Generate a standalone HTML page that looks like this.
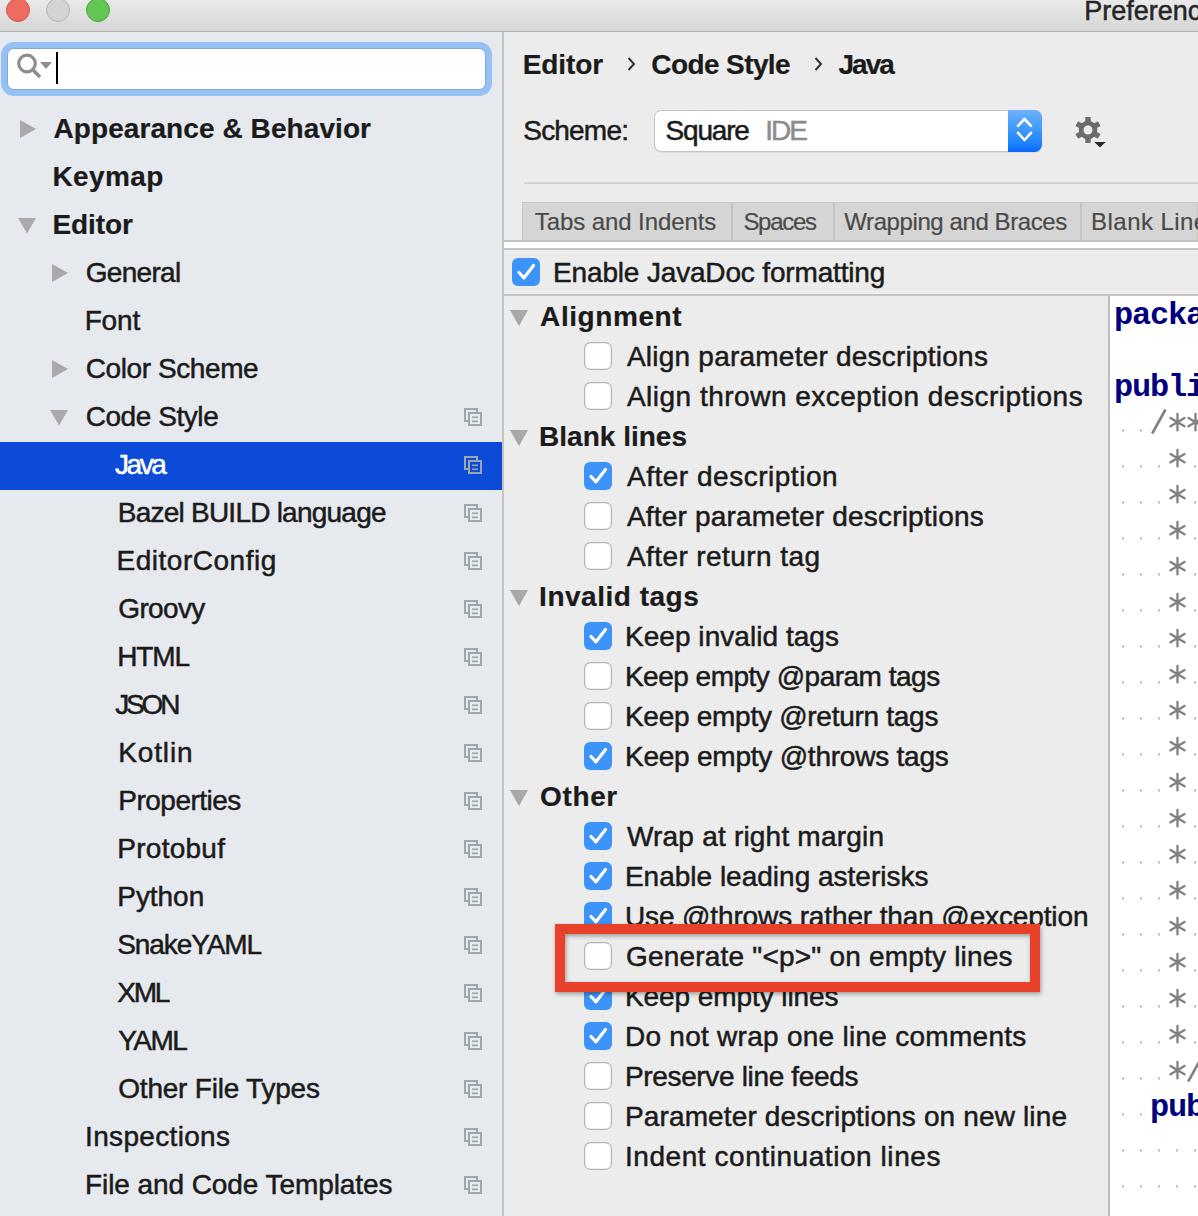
<!DOCTYPE html><html><head><meta charset="utf-8"><style>
html,body{margin:0;padding:0;}
body{width:1198px;height:1216px;overflow:hidden;position:relative;background:#ececec;font-family:"Liberation Sans",sans-serif;}
div{box-sizing:border-box;}
svg{position:absolute;}
</style></head><body>
<div style="position:absolute;left:0px;top:0px;width:1198px;height:31px;background:linear-gradient(#e9e9e9,#d6d6d6);"></div>
<div style="position:absolute;left:0px;top:31px;width:1198px;height:1px;background:#b2b2b2;"></div>
<svg style="left:0;top:0" width="130" height="31"><circle cx="18" cy="10" r="11.5" fill="#ee6b60" stroke="#d3574c" stroke-width="1"/><circle cx="58" cy="10" r="11.5" fill="#d3d3d3" stroke="#b4b4b4" stroke-width="1"/><circle cx="98" cy="10" r="11.5" fill="#62c554" stroke="#4aa83f" stroke-width="1"/></svg>
<div style="position:absolute;left:1084.25px;top:-9.36px;height:40px;line-height:40px;font-family:'Liberation Sans', sans-serif;font-size:27px;font-weight:400;color:#262626;letter-spacing:0.000px;white-space:pre;-webkit-text-stroke:0.5px #262626;">Preferences</div>
<div style="position:absolute;left:0px;top:32px;width:502px;height:1184px;background:#e6e9ed;"></div>
<div style="position:absolute;left:502px;top:32px;width:2px;height:1184px;background:#c4c4c4;"></div>
<div style="position:absolute;left:1px;top:42px;width:491px;height:54px;background:#95c1f5;border-radius:13px;"></div>
<div style="position:absolute;left:6.5px;top:48px;width:479.5px;height:42px;background:#fff;border-radius:7px;border:1px solid #7eaae0;"></div>
<svg style="left:0;top:40" width="70" height="50"><circle cx="27" cy="23.5" r="8.3" fill="none" stroke="#8e8e8e" stroke-width="3.2"/><line x1="32" y1="29" x2="40" y2="37" stroke="#8e8e8e" stroke-width="3.5"/><path d="M40 22 L52 22 L46 29 Z" fill="#8e8e8e"/></svg>
<div style="position:absolute;left:56px;top:52px;width:2px;height:32px;background:#000;"></div>
<div style="position:absolute;left:0px;top:442px;width:502px;height:48px;background:#0b4bd8;"></div>
<div style="position:absolute;left:53.50px;top:109.30px;height:40px;line-height:40px;font-family:'Liberation Sans', sans-serif;font-size:28px;font-weight:700;color:#1b1b1b;letter-spacing:0.080px;white-space:pre;-webkit-text-stroke:0.2px #1b1b1b;">Appearance &amp; Behavior</div>
<svg style="left:0px;top:106px" width="40" height="48"><path d="M20 14 L36 23 L20 32 Z" fill="#a9a9a9"/></svg>
<div style="position:absolute;left:52.50px;top:157.30px;height:40px;line-height:40px;font-family:'Liberation Sans', sans-serif;font-size:28px;font-weight:700;color:#1b1b1b;letter-spacing:0.400px;white-space:pre;-webkit-text-stroke:0.2px #1b1b1b;">Keymap</div>
<div style="position:absolute;left:52.50px;top:205.30px;height:40px;line-height:40px;font-family:'Liberation Sans', sans-serif;font-size:28px;font-weight:700;color:#1b1b1b;letter-spacing:-0.080px;white-space:pre;-webkit-text-stroke:0.2px #1b1b1b;">Editor</div>
<svg style="left:0px;top:202px" width="40" height="48"><path d="M18 16 L36 16 L27 31.5 Z" fill="#a9a9a9"/></svg>
<div style="position:absolute;left:85.65px;top:253.30px;height:40px;line-height:40px;font-family:'Liberation Sans', sans-serif;font-size:28px;font-weight:400;color:#1b1b1b;letter-spacing:-0.683px;white-space:pre;-webkit-text-stroke:0.5px #1b1b1b;">General</div>
<svg style="left:32px;top:250px" width="40" height="48"><path d="M20 14 L36 23 L20 32 Z" fill="#a9a9a9"/></svg>
<div style="position:absolute;left:84.65px;top:301.30px;height:40px;line-height:40px;font-family:'Liberation Sans', sans-serif;font-size:28px;font-weight:400;color:#1b1b1b;letter-spacing:-0.133px;white-space:pre;-webkit-text-stroke:0.5px #1b1b1b;">Font</div>
<div style="position:absolute;left:85.65px;top:349.30px;height:40px;line-height:40px;font-family:'Liberation Sans', sans-serif;font-size:28px;font-weight:400;color:#1b1b1b;letter-spacing:-0.400px;white-space:pre;-webkit-text-stroke:0.5px #1b1b1b;">Color Scheme</div>
<svg style="left:32px;top:346px" width="40" height="48"><path d="M20 14 L36 23 L20 32 Z" fill="#a9a9a9"/></svg>
<div style="position:absolute;left:85.65px;top:397.30px;height:40px;line-height:40px;font-family:'Liberation Sans', sans-serif;font-size:28px;font-weight:400;color:#1b1b1b;letter-spacing:-0.433px;white-space:pre;-webkit-text-stroke:0.5px #1b1b1b;">Code Style</div>
<svg style="left:32px;top:394px" width="40" height="48"><path d="M18 16 L36 16 L27 31.5 Z" fill="#a9a9a9"/></svg>
<svg style="left:460px;top:394px" width="30" height="48"><rect x="5" y="15" width="12" height="12" fill="none" stroke="#9ba6ae" stroke-width="2"/><rect x="9" y="19" width="12" height="12" fill="#e6e9ed" stroke="#9ba6ae" stroke-width="2"/><rect x="12" y="22.5" width="6" height="1.6" fill="#9ba6ae"/><rect x="12" y="26.5" width="6" height="1.6" fill="#9ba6ae"/></svg>
<div style="position:absolute;left:115.05px;top:445.30px;height:40px;line-height:40px;font-family:'Liberation Sans', sans-serif;font-size:28px;font-weight:400;color:#ffffff;letter-spacing:-2.433px;white-space:pre;-webkit-text-stroke:0.5px #ffffff;">Java</div>
<svg style="left:460px;top:442px" width="30" height="48"><rect x="5" y="15" width="12" height="12" fill="none" stroke="#9ba6ae" stroke-width="2"/><rect x="9" y="19" width="12" height="12" fill="#0b4bd8" stroke="#9ba6ae" stroke-width="2"/><rect x="12" y="22.5" width="6" height="1.6" fill="#9ba6ae"/><rect x="12" y="26.5" width="6" height="1.6" fill="#9ba6ae"/></svg>
<div style="position:absolute;left:117.75px;top:493.30px;height:40px;line-height:40px;font-family:'Liberation Sans', sans-serif;font-size:28px;font-weight:400;color:#1b1b1b;letter-spacing:-0.763px;white-space:pre;-webkit-text-stroke:0.5px #1b1b1b;">Bazel BUILD language</div>
<svg style="left:460px;top:490px" width="30" height="48"><rect x="5" y="15" width="12" height="12" fill="none" stroke="#9ba6ae" stroke-width="2"/><rect x="9" y="19" width="12" height="12" fill="#e6e9ed" stroke="#9ba6ae" stroke-width="2"/><rect x="12" y="22.5" width="6" height="1.6" fill="#9ba6ae"/><rect x="12" y="26.5" width="6" height="1.6" fill="#9ba6ae"/></svg>
<div style="position:absolute;left:116.55px;top:541.30px;height:40px;line-height:40px;font-family:'Liberation Sans', sans-serif;font-size:28px;font-weight:400;color:#1b1b1b;letter-spacing:0.509px;white-space:pre;-webkit-text-stroke:0.5px #1b1b1b;">EditorConfig</div>
<svg style="left:460px;top:538px" width="30" height="48"><rect x="5" y="15" width="12" height="12" fill="none" stroke="#9ba6ae" stroke-width="2"/><rect x="9" y="19" width="12" height="12" fill="#e6e9ed" stroke="#9ba6ae" stroke-width="2"/><rect x="12" y="22.5" width="6" height="1.6" fill="#9ba6ae"/><rect x="12" y="26.5" width="6" height="1.6" fill="#9ba6ae"/></svg>
<div style="position:absolute;left:118.25px;top:589.30px;height:40px;line-height:40px;font-family:'Liberation Sans', sans-serif;font-size:28px;font-weight:400;color:#1b1b1b;letter-spacing:-0.640px;white-space:pre;-webkit-text-stroke:0.5px #1b1b1b;">Groovy</div>
<svg style="left:460px;top:586px" width="30" height="48"><rect x="5" y="15" width="12" height="12" fill="none" stroke="#9ba6ae" stroke-width="2"/><rect x="9" y="19" width="12" height="12" fill="#e6e9ed" stroke="#9ba6ae" stroke-width="2"/><rect x="12" y="22.5" width="6" height="1.6" fill="#9ba6ae"/><rect x="12" y="26.5" width="6" height="1.6" fill="#9ba6ae"/></svg>
<div style="position:absolute;left:117.25px;top:637.30px;height:40px;line-height:40px;font-family:'Liberation Sans', sans-serif;font-size:28px;font-weight:400;color:#1b1b1b;letter-spacing:-1.167px;white-space:pre;-webkit-text-stroke:0.5px #1b1b1b;">HTML</div>
<svg style="left:460px;top:634px" width="30" height="48"><rect x="5" y="15" width="12" height="12" fill="none" stroke="#9ba6ae" stroke-width="2"/><rect x="9" y="19" width="12" height="12" fill="#e6e9ed" stroke="#9ba6ae" stroke-width="2"/><rect x="12" y="22.5" width="6" height="1.6" fill="#9ba6ae"/><rect x="12" y="26.5" width="6" height="1.6" fill="#9ba6ae"/></svg>
<div style="position:absolute;left:115.25px;top:685.30px;height:40px;line-height:40px;font-family:'Liberation Sans', sans-serif;font-size:28px;font-weight:400;color:#1b1b1b;letter-spacing:-3.167px;white-space:pre;-webkit-text-stroke:0.5px #1b1b1b;">JSON</div>
<svg style="left:460px;top:682px" width="30" height="48"><rect x="5" y="15" width="12" height="12" fill="none" stroke="#9ba6ae" stroke-width="2"/><rect x="9" y="19" width="12" height="12" fill="#e6e9ed" stroke="#9ba6ae" stroke-width="2"/><rect x="12" y="22.5" width="6" height="1.6" fill="#9ba6ae"/><rect x="12" y="26.5" width="6" height="1.6" fill="#9ba6ae"/></svg>
<div style="position:absolute;left:118.25px;top:733.30px;height:40px;line-height:40px;font-family:'Liberation Sans', sans-serif;font-size:28px;font-weight:400;color:#1b1b1b;letter-spacing:0.860px;white-space:pre;-webkit-text-stroke:0.5px #1b1b1b;">Kotlin</div>
<svg style="left:460px;top:730px" width="30" height="48"><rect x="5" y="15" width="12" height="12" fill="none" stroke="#9ba6ae" stroke-width="2"/><rect x="9" y="19" width="12" height="12" fill="#e6e9ed" stroke="#9ba6ae" stroke-width="2"/><rect x="12" y="22.5" width="6" height="1.6" fill="#9ba6ae"/><rect x="12" y="26.5" width="6" height="1.6" fill="#9ba6ae"/></svg>
<div style="position:absolute;left:118.25px;top:781.30px;height:40px;line-height:40px;font-family:'Liberation Sans', sans-serif;font-size:28px;font-weight:400;color:#1b1b1b;letter-spacing:-0.500px;white-space:pre;-webkit-text-stroke:0.5px #1b1b1b;">Properties</div>
<svg style="left:460px;top:778px" width="30" height="48"><rect x="5" y="15" width="12" height="12" fill="none" stroke="#9ba6ae" stroke-width="2"/><rect x="9" y="19" width="12" height="12" fill="#e6e9ed" stroke="#9ba6ae" stroke-width="2"/><rect x="12" y="22.5" width="6" height="1.6" fill="#9ba6ae"/><rect x="12" y="26.5" width="6" height="1.6" fill="#9ba6ae"/></svg>
<div style="position:absolute;left:117.25px;top:829.30px;height:40px;line-height:40px;font-family:'Liberation Sans', sans-serif;font-size:28px;font-weight:400;color:#1b1b1b;letter-spacing:0.271px;white-space:pre;-webkit-text-stroke:0.5px #1b1b1b;">Protobuf</div>
<svg style="left:460px;top:826px" width="30" height="48"><rect x="5" y="15" width="12" height="12" fill="none" stroke="#9ba6ae" stroke-width="2"/><rect x="9" y="19" width="12" height="12" fill="#e6e9ed" stroke="#9ba6ae" stroke-width="2"/><rect x="12" y="22.5" width="6" height="1.6" fill="#9ba6ae"/><rect x="12" y="26.5" width="6" height="1.6" fill="#9ba6ae"/></svg>
<div style="position:absolute;left:117.25px;top:877.30px;height:40px;line-height:40px;font-family:'Liberation Sans', sans-serif;font-size:28px;font-weight:400;color:#1b1b1b;letter-spacing:-0.040px;white-space:pre;-webkit-text-stroke:0.5px #1b1b1b;">Python</div>
<svg style="left:460px;top:874px" width="30" height="48"><rect x="5" y="15" width="12" height="12" fill="none" stroke="#9ba6ae" stroke-width="2"/><rect x="9" y="19" width="12" height="12" fill="#e6e9ed" stroke="#9ba6ae" stroke-width="2"/><rect x="12" y="22.5" width="6" height="1.6" fill="#9ba6ae"/><rect x="12" y="26.5" width="6" height="1.6" fill="#9ba6ae"/></svg>
<div style="position:absolute;left:117.25px;top:925.30px;height:40px;line-height:40px;font-family:'Liberation Sans', sans-serif;font-size:28px;font-weight:400;color:#1b1b1b;letter-spacing:-1.100px;white-space:pre;-webkit-text-stroke:0.5px #1b1b1b;">SnakeYAML</div>
<svg style="left:460px;top:922px" width="30" height="48"><rect x="5" y="15" width="12" height="12" fill="none" stroke="#9ba6ae" stroke-width="2"/><rect x="9" y="19" width="12" height="12" fill="#e6e9ed" stroke="#9ba6ae" stroke-width="2"/><rect x="12" y="22.5" width="6" height="1.6" fill="#9ba6ae"/><rect x="12" y="26.5" width="6" height="1.6" fill="#9ba6ae"/></svg>
<div style="position:absolute;left:117.25px;top:973.30px;height:40px;line-height:40px;font-family:'Liberation Sans', sans-serif;font-size:28px;font-weight:400;color:#1b1b1b;letter-spacing:-2.250px;white-space:pre;-webkit-text-stroke:0.5px #1b1b1b;">XML</div>
<svg style="left:460px;top:970px" width="30" height="48"><rect x="5" y="15" width="12" height="12" fill="none" stroke="#9ba6ae" stroke-width="2"/><rect x="9" y="19" width="12" height="12" fill="#e6e9ed" stroke="#9ba6ae" stroke-width="2"/><rect x="12" y="22.5" width="6" height="1.6" fill="#9ba6ae"/><rect x="12" y="26.5" width="6" height="1.6" fill="#9ba6ae"/></svg>
<div style="position:absolute;left:118.25px;top:1021.30px;height:40px;line-height:40px;font-family:'Liberation Sans', sans-serif;font-size:28px;font-weight:400;color:#1b1b1b;letter-spacing:-1.567px;white-space:pre;-webkit-text-stroke:0.5px #1b1b1b;">YAML</div>
<svg style="left:460px;top:1018px" width="30" height="48"><rect x="5" y="15" width="12" height="12" fill="none" stroke="#9ba6ae" stroke-width="2"/><rect x="9" y="19" width="12" height="12" fill="#e6e9ed" stroke="#9ba6ae" stroke-width="2"/><rect x="12" y="22.5" width="6" height="1.6" fill="#9ba6ae"/><rect x="12" y="26.5" width="6" height="1.6" fill="#9ba6ae"/></svg>
<div style="position:absolute;left:118.25px;top:1069.30px;height:40px;line-height:40px;font-family:'Liberation Sans', sans-serif;font-size:28px;font-weight:400;color:#1b1b1b;letter-spacing:-0.213px;white-space:pre;-webkit-text-stroke:0.5px #1b1b1b;">Other File Types</div>
<svg style="left:460px;top:1066px" width="30" height="48"><rect x="5" y="15" width="12" height="12" fill="none" stroke="#9ba6ae" stroke-width="2"/><rect x="9" y="19" width="12" height="12" fill="#e6e9ed" stroke="#9ba6ae" stroke-width="2"/><rect x="12" y="22.5" width="6" height="1.6" fill="#9ba6ae"/><rect x="12" y="26.5" width="6" height="1.6" fill="#9ba6ae"/></svg>
<div style="position:absolute;left:85.05px;top:1117.30px;height:40px;line-height:40px;font-family:'Liberation Sans', sans-serif;font-size:28px;font-weight:400;color:#1b1b1b;letter-spacing:0.330px;white-space:pre;-webkit-text-stroke:0.5px #1b1b1b;">Inspections</div>
<svg style="left:460px;top:1114px" width="30" height="48"><rect x="5" y="15" width="12" height="12" fill="none" stroke="#9ba6ae" stroke-width="2"/><rect x="9" y="19" width="12" height="12" fill="#e6e9ed" stroke="#9ba6ae" stroke-width="2"/><rect x="12" y="22.5" width="6" height="1.6" fill="#9ba6ae"/><rect x="12" y="26.5" width="6" height="1.6" fill="#9ba6ae"/></svg>
<div style="position:absolute;left:85.05px;top:1165.30px;height:40px;line-height:40px;font-family:'Liberation Sans', sans-serif;font-size:28px;font-weight:400;color:#1b1b1b;letter-spacing:-0.082px;white-space:pre;-webkit-text-stroke:0.5px #1b1b1b;">File and Code Templates</div>
<svg style="left:460px;top:1162px" width="30" height="48"><rect x="5" y="15" width="12" height="12" fill="none" stroke="#9ba6ae" stroke-width="2"/><rect x="9" y="19" width="12" height="12" fill="#e6e9ed" stroke="#9ba6ae" stroke-width="2"/><rect x="12" y="22.5" width="6" height="1.6" fill="#9ba6ae"/><rect x="12" y="26.5" width="6" height="1.6" fill="#9ba6ae"/></svg>
<div style="position:absolute;left:522.70px;top:45.30px;height:40px;line-height:40px;font-family:'Liberation Sans', sans-serif;font-size:28px;font-weight:700;color:#1b1b1b;letter-spacing:-0.080px;white-space:pre;-webkit-text-stroke:0.2px #1b1b1b;">Editor</div>
<div style="position:absolute;left:651.30px;top:45.30px;height:40px;line-height:40px;font-family:'Liberation Sans', sans-serif;font-size:28px;font-weight:700;color:#1b1b1b;letter-spacing:-0.600px;white-space:pre;-webkit-text-stroke:0.2px #1b1b1b;">Code Style</div>
<div style="position:absolute;left:838.50px;top:45.30px;height:40px;line-height:40px;font-family:'Liberation Sans', sans-serif;font-size:28px;font-weight:700;color:#1b1b1b;letter-spacing:-1.967px;white-space:pre;-webkit-text-stroke:0.2px #1b1b1b;">Java</div>
<svg style="left:627px;top:56px" width="10" height="16"><path d="M1.5 2 L7 8 L1.5 14" fill="none" stroke="#333" stroke-width="2"/></svg>
<svg style="left:814px;top:56px" width="10" height="16"><path d="M1.5 2 L7 8 L1.5 14" fill="none" stroke="#333" stroke-width="2"/></svg>
<div style="position:absolute;left:523.25px;top:111.30px;height:40px;line-height:40px;font-family:'Liberation Sans', sans-serif;font-size:28px;font-weight:400;color:#1b1b1b;letter-spacing:-0.800px;white-space:pre;-webkit-text-stroke:0.5px #1b1b1b;">Scheme:</div>
<div style="position:absolute;left:654px;top:110px;width:388px;height:42px;background:#fff;border-radius:7px;box-shadow:0 0 0 1px #c3c3c3 inset, 0 1px 1px rgba(0,0,0,0.05);"></div>
<div style="position:absolute;left:1008px;top:110px;width:34px;height:42px;background:linear-gradient(#6fb1fc,#3f9afb 45%,#1c84fc 80%,#0b62fc);border-radius:0 7.5px 7.5px 0;"></div>
<svg style="left:1008px;top:110px" width="34" height="42"><path d="M10 15.9 L16.5 9 L23 15.9 M10 22.8 L16.5 30 L23 22.8" fill="none" stroke="#fff" stroke-width="2.6" stroke-linecap="round" stroke-linejoin="round"/></svg>
<div style="position:absolute;left:665.55px;top:111.30px;height:40px;line-height:40px;font-family:'Liberation Sans', sans-serif;font-size:28px;font-weight:400;color:#1b1b1b;letter-spacing:-1.180px;white-space:pre;-webkit-text-stroke:0.5px #1b1b1b;">Square</div>
<div style="position:absolute;left:765.25px;top:111.30px;height:40px;line-height:40px;font-family:'Liberation Sans', sans-serif;font-size:28px;font-weight:400;color:#8c8c8c;letter-spacing:-2.000px;white-space:pre;-webkit-text-stroke:0.5px #8c8c8c;">IDE</div>
<svg style="left:1070px;top:110px" width="40" height="40"><g transform="translate(18,20)" fill="#6c6c6c"><rect x="-2.7" y="-12.9" width="5.4" height="7" rx="0.6" transform="rotate(0)"/><rect x="-2.7" y="-12.9" width="5.4" height="7" rx="0.6" transform="rotate(60)"/><rect x="-2.7" y="-12.9" width="5.4" height="7" rx="0.6" transform="rotate(120)"/><rect x="-2.7" y="-12.9" width="5.4" height="7" rx="0.6" transform="rotate(180)"/><rect x="-2.7" y="-12.9" width="5.4" height="7" rx="0.6" transform="rotate(240)"/><rect x="-2.7" y="-12.9" width="5.4" height="7" rx="0.6" transform="rotate(300)"/><circle r="9.3"/><circle r="4.5" fill="#ececec"/></g><path d="M24.2 32.1 L35.7 32.1 L30 37.6 Z" fill="#2b2b2b"/></svg>
<div style="position:absolute;left:524px;top:182px;width:674px;height:2px;background:#d3d3d3;"></div>
<div style="position:absolute;left:522px;top:202px;width:676px;height:39px;background:#d5d5d5;border:1px solid #c8c8c8;border-bottom:none;"></div>
<div style="position:absolute;left:731px;top:203px;width:2px;height:38px;background:#c4c4c4;"></div>
<div style="position:absolute;left:833px;top:203px;width:2px;height:38px;background:#c4c4c4;"></div>
<div style="position:absolute;left:1080px;top:203px;width:2px;height:38px;background:#c4c4c4;"></div>
<div style="position:absolute;left:534.80px;top:202.18px;height:40px;line-height:40px;font-family:'Liberation Sans', sans-serif;font-size:24px;font-weight:400;color:#4a4a4a;letter-spacing:-0.087px;white-space:pre;-webkit-text-stroke:0.2px #4a4a4a;">Tabs and Indents</div>
<div style="position:absolute;left:743.40px;top:202.18px;height:40px;line-height:40px;font-family:'Liberation Sans', sans-serif;font-size:24px;font-weight:400;color:#4a4a4a;letter-spacing:-1.300px;white-space:pre;-webkit-text-stroke:0.2px #4a4a4a;">Spaces</div>
<div style="position:absolute;left:844.30px;top:202.18px;height:40px;line-height:40px;font-family:'Liberation Sans', sans-serif;font-size:24px;font-weight:400;color:#4a4a4a;letter-spacing:-0.411px;white-space:pre;-webkit-text-stroke:0.2px #4a4a4a;">Wrapping and Braces</div>
<div style="position:absolute;left:1091.10px;top:202.18px;height:40px;line-height:40px;font-family:'Liberation Sans', sans-serif;font-size:24px;font-weight:400;color:#4a4a4a;letter-spacing:0.000px;white-space:pre;-webkit-text-stroke:0.2px #4a4a4a;letter-spacing:0.45px">Blank Lines</div>
<div style="position:absolute;left:504px;top:240px;width:694px;height:2px;background:#c2c2c2;"></div>
<div style="position:absolute;left:504px;top:242px;width:694px;height:6px;background:#fff;"></div>
<div style="position:absolute;left:504px;top:248px;width:694px;height:2px;background:#c4c4c4;"></div>
<svg style="left:512px;top:258px" width="28" height="28"><rect x="0" y="0" width="28" height="28" rx="6" fill="#3c93f9"/><path d="M7 14.5 L12 19.8 L21.5 7.5" fill="none" stroke="#fff" stroke-width="3.2" stroke-linecap="round" stroke-linejoin="round"/></svg>
<div style="position:absolute;left:553.05px;top:252.80px;height:40px;line-height:40px;font-family:'Liberation Sans', sans-serif;font-size:28px;font-weight:400;color:#1b1b1b;letter-spacing:-0.162px;white-space:pre;-webkit-text-stroke:0.5px #1b1b1b;">Enable JavaDoc formatting</div>
<div style="position:absolute;left:504px;top:294px;width:694px;height:2px;background:#c4c4c4;"></div>
<svg style="left:500px;top:296px" width="40" height="40"><path d="M10 14 L28 14 L19 30 Z" fill="#a9a9a9"/></svg>
<div style="position:absolute;left:540.10px;top:297.30px;height:40px;line-height:40px;font-family:'Liberation Sans', sans-serif;font-size:28px;font-weight:700;color:#1b1b1b;letter-spacing:0.575px;white-space:pre;-webkit-text-stroke:0.2px #1b1b1b;">Alignment</div>
<svg style="left:584px;top:342px" width="28" height="28"><rect x="0.6" y="0.6" width="26.8" height="26.8" rx="6" fill="#fff" stroke="#b4b4b4" stroke-width="1.2"/></svg>
<div style="position:absolute;left:626.95px;top:337.30px;height:40px;line-height:40px;font-family:'Liberation Sans', sans-serif;font-size:28px;font-weight:400;color:#1b1b1b;letter-spacing:0.226px;white-space:pre;-webkit-text-stroke:0.5px #1b1b1b;">Align parameter descriptions</div>
<svg style="left:584px;top:382px" width="28" height="28"><rect x="0.6" y="0.6" width="26.8" height="26.8" rx="6" fill="#fff" stroke="#b4b4b4" stroke-width="1.2"/></svg>
<div style="position:absolute;left:626.95px;top:377.30px;height:40px;line-height:40px;font-family:'Liberation Sans', sans-serif;font-size:28px;font-weight:400;color:#1b1b1b;letter-spacing:0.494px;white-space:pre;-webkit-text-stroke:0.5px #1b1b1b;">Align thrown exception descriptions</div>
<svg style="left:500px;top:416px" width="40" height="40"><path d="M10 14 L28 14 L19 30 Z" fill="#a9a9a9"/></svg>
<div style="position:absolute;left:539.10px;top:417.30px;height:40px;line-height:40px;font-family:'Liberation Sans', sans-serif;font-size:28px;font-weight:700;color:#1b1b1b;letter-spacing:0.010px;white-space:pre;-webkit-text-stroke:0.2px #1b1b1b;">Blank lines</div>
<svg style="left:584px;top:462px" width="28" height="28"><rect x="0" y="0" width="28" height="28" rx="6" fill="#3c93f9"/><path d="M7 14.5 L12 19.8 L21.5 7.5" fill="none" stroke="#fff" stroke-width="3.2" stroke-linecap="round" stroke-linejoin="round"/></svg>
<div style="position:absolute;left:626.95px;top:457.30px;height:40px;line-height:40px;font-family:'Liberation Sans', sans-serif;font-size:28px;font-weight:400;color:#1b1b1b;letter-spacing:0.519px;white-space:pre;-webkit-text-stroke:0.5px #1b1b1b;">After description</div>
<svg style="left:584px;top:502px" width="28" height="28"><rect x="0.6" y="0.6" width="26.8" height="26.8" rx="6" fill="#fff" stroke="#b4b4b4" stroke-width="1.2"/></svg>
<div style="position:absolute;left:626.95px;top:497.30px;height:40px;line-height:40px;font-family:'Liberation Sans', sans-serif;font-size:28px;font-weight:400;color:#1b1b1b;letter-spacing:0.189px;white-space:pre;-webkit-text-stroke:0.5px #1b1b1b;">After parameter descriptions</div>
<svg style="left:584px;top:542px" width="28" height="28"><rect x="0.6" y="0.6" width="26.8" height="26.8" rx="6" fill="#fff" stroke="#b4b4b4" stroke-width="1.2"/></svg>
<div style="position:absolute;left:626.95px;top:537.30px;height:40px;line-height:40px;font-family:'Liberation Sans', sans-serif;font-size:28px;font-weight:400;color:#1b1b1b;letter-spacing:0.420px;white-space:pre;-webkit-text-stroke:0.5px #1b1b1b;">After return tag</div>
<svg style="left:500px;top:576px" width="40" height="40"><path d="M10 14 L28 14 L19 30 Z" fill="#a9a9a9"/></svg>
<div style="position:absolute;left:539.10px;top:577.30px;height:40px;line-height:40px;font-family:'Liberation Sans', sans-serif;font-size:28px;font-weight:700;color:#1b1b1b;letter-spacing:0.509px;white-space:pre;-webkit-text-stroke:0.2px #1b1b1b;">Invalid tags</div>
<svg style="left:584px;top:622px" width="28" height="28"><rect x="0" y="0" width="28" height="28" rx="6" fill="#3c93f9"/><path d="M7 14.5 L12 19.8 L21.5 7.5" fill="none" stroke="#fff" stroke-width="3.2" stroke-linecap="round" stroke-linejoin="round"/></svg>
<div style="position:absolute;left:624.95px;top:617.30px;height:40px;line-height:40px;font-family:'Liberation Sans', sans-serif;font-size:28px;font-weight:400;color:#1b1b1b;letter-spacing:0.050px;white-space:pre;-webkit-text-stroke:0.5px #1b1b1b;">Keep invalid tags</div>
<svg style="left:584px;top:662px" width="28" height="28"><rect x="0.6" y="0.6" width="26.8" height="26.8" rx="6" fill="#fff" stroke="#b4b4b4" stroke-width="1.2"/></svg>
<div style="position:absolute;left:624.95px;top:657.30px;height:40px;line-height:40px;font-family:'Liberation Sans', sans-serif;font-size:28px;font-weight:400;color:#1b1b1b;letter-spacing:-0.500px;white-space:pre;-webkit-text-stroke:0.5px #1b1b1b;">Keep empty @param tags</div>
<svg style="left:584px;top:702px" width="28" height="28"><rect x="0.6" y="0.6" width="26.8" height="26.8" rx="6" fill="#fff" stroke="#b4b4b4" stroke-width="1.2"/></svg>
<div style="position:absolute;left:624.95px;top:697.30px;height:40px;line-height:40px;font-family:'Liberation Sans', sans-serif;font-size:28px;font-weight:400;color:#1b1b1b;letter-spacing:-0.273px;white-space:pre;-webkit-text-stroke:0.5px #1b1b1b;">Keep empty @return tags</div>
<svg style="left:584px;top:742px" width="28" height="28"><rect x="0" y="0" width="28" height="28" rx="6" fill="#3c93f9"/><path d="M7 14.5 L12 19.8 L21.5 7.5" fill="none" stroke="#fff" stroke-width="3.2" stroke-linecap="round" stroke-linejoin="round"/></svg>
<div style="position:absolute;left:624.95px;top:737.30px;height:40px;line-height:40px;font-family:'Liberation Sans', sans-serif;font-size:28px;font-weight:400;color:#1b1b1b;letter-spacing:-0.227px;white-space:pre;-webkit-text-stroke:0.5px #1b1b1b;">Keep empty @throws tags</div>
<svg style="left:500px;top:776px" width="40" height="40"><path d="M10 14 L28 14 L19 30 Z" fill="#a9a9a9"/></svg>
<div style="position:absolute;left:540.10px;top:777.30px;height:40px;line-height:40px;font-family:'Liberation Sans', sans-serif;font-size:28px;font-weight:700;color:#1b1b1b;letter-spacing:0.625px;white-space:pre;-webkit-text-stroke:0.2px #1b1b1b;">Other</div>
<svg style="left:584px;top:822px" width="28" height="28"><rect x="0" y="0" width="28" height="28" rx="6" fill="#3c93f9"/><path d="M7 14.5 L12 19.8 L21.5 7.5" fill="none" stroke="#fff" stroke-width="3.2" stroke-linecap="round" stroke-linejoin="round"/></svg>
<div style="position:absolute;left:626.95px;top:817.30px;height:40px;line-height:40px;font-family:'Liberation Sans', sans-serif;font-size:28px;font-weight:400;color:#1b1b1b;letter-spacing:0.205px;white-space:pre;-webkit-text-stroke:0.5px #1b1b1b;">Wrap at right margin</div>
<svg style="left:584px;top:862px" width="28" height="28"><rect x="0" y="0" width="28" height="28" rx="6" fill="#3c93f9"/><path d="M7 14.5 L12 19.8 L21.5 7.5" fill="none" stroke="#fff" stroke-width="3.2" stroke-linecap="round" stroke-linejoin="round"/></svg>
<div style="position:absolute;left:624.95px;top:857.30px;height:40px;line-height:40px;font-family:'Liberation Sans', sans-serif;font-size:28px;font-weight:400;color:#1b1b1b;letter-spacing:0.000px;white-space:pre;-webkit-text-stroke:0.5px #1b1b1b;">Enable leading asterisks</div>
<svg style="left:584px;top:902px" width="28" height="28"><rect x="0" y="0" width="28" height="28" rx="6" fill="#3c93f9"/><path d="M7 14.5 L12 19.8 L21.5 7.5" fill="none" stroke="#fff" stroke-width="3.2" stroke-linecap="round" stroke-linejoin="round"/></svg>
<div style="position:absolute;left:624.95px;top:897.30px;height:40px;line-height:40px;font-family:'Liberation Sans', sans-serif;font-size:28px;font-weight:400;color:#1b1b1b;letter-spacing:-0.127px;white-space:pre;-webkit-text-stroke:0.5px #1b1b1b;">Use @throws rather than @exception</div>
<svg style="left:584px;top:942px" width="28" height="28"><rect x="0.6" y="0.6" width="26.8" height="26.8" rx="6" fill="#fff" stroke="#b4b4b4" stroke-width="1.2"/></svg>
<div style="position:absolute;left:625.95px;top:937.30px;height:40px;line-height:40px;font-family:'Liberation Sans', sans-serif;font-size:28px;font-weight:400;color:#1b1b1b;letter-spacing:0.200px;white-space:pre;-webkit-text-stroke:0.5px #1b1b1b;">Generate &quot;&lt;p&gt;&quot; on empty lines</div>
<svg style="left:584px;top:982px" width="28" height="28"><rect x="0" y="0" width="28" height="28" rx="6" fill="#3c93f9"/><path d="M7 14.5 L12 19.8 L21.5 7.5" fill="none" stroke="#fff" stroke-width="3.2" stroke-linecap="round" stroke-linejoin="round"/></svg>
<div style="position:absolute;left:624.95px;top:977.30px;height:40px;line-height:40px;font-family:'Liberation Sans', sans-serif;font-size:28px;font-weight:400;color:#1b1b1b;letter-spacing:-0.080px;white-space:pre;-webkit-text-stroke:0.5px #1b1b1b;">Keep empty lines</div>
<svg style="left:584px;top:1022px" width="28" height="28"><rect x="0" y="0" width="28" height="28" rx="6" fill="#3c93f9"/><path d="M7 14.5 L12 19.8 L21.5 7.5" fill="none" stroke="#fff" stroke-width="3.2" stroke-linecap="round" stroke-linejoin="round"/></svg>
<div style="position:absolute;left:624.95px;top:1017.30px;height:40px;line-height:40px;font-family:'Liberation Sans', sans-serif;font-size:28px;font-weight:400;color:#1b1b1b;letter-spacing:0.271px;white-space:pre;-webkit-text-stroke:0.5px #1b1b1b;">Do not wrap one line comments</div>
<svg style="left:584px;top:1062px" width="28" height="28"><rect x="0.6" y="0.6" width="26.8" height="26.8" rx="6" fill="#fff" stroke="#b4b4b4" stroke-width="1.2"/></svg>
<div style="position:absolute;left:624.95px;top:1057.30px;height:40px;line-height:40px;font-family:'Liberation Sans', sans-serif;font-size:28px;font-weight:400;color:#1b1b1b;letter-spacing:-0.344px;white-space:pre;-webkit-text-stroke:0.5px #1b1b1b;">Preserve line feeds</div>
<svg style="left:584px;top:1102px" width="28" height="28"><rect x="0.6" y="0.6" width="26.8" height="26.8" rx="6" fill="#fff" stroke="#b4b4b4" stroke-width="1.2"/></svg>
<div style="position:absolute;left:624.95px;top:1097.30px;height:40px;line-height:40px;font-family:'Liberation Sans', sans-serif;font-size:28px;font-weight:400;color:#1b1b1b;letter-spacing:0.142px;white-space:pre;-webkit-text-stroke:0.5px #1b1b1b;">Parameter descriptions on new line</div>
<svg style="left:584px;top:1142px" width="28" height="28"><rect x="0.6" y="0.6" width="26.8" height="26.8" rx="6" fill="#fff" stroke="#b4b4b4" stroke-width="1.2"/></svg>
<div style="position:absolute;left:624.95px;top:1137.30px;height:40px;line-height:40px;font-family:'Liberation Sans', sans-serif;font-size:28px;font-weight:400;color:#1b1b1b;letter-spacing:0.562px;white-space:pre;-webkit-text-stroke:0.5px #1b1b1b;">Indent continuation lines</div>
<div style="position:absolute;left:1108px;top:296px;width:2px;height:920px;background:#bdbdbd;"></div>
<div style="position:absolute;left:1110px;top:296px;width:88px;height:920px;background:#fff;"></div>
<svg style="left:1110px;top:297px" width="88" height="919"><text x="4" y="26.5" font-family="Liberation Mono" font-weight="700" font-size="32" letter-spacing="-1.2" fill="#000080">package</text><text x="4" y="98.5" font-family="Liberation Mono" font-weight="700" font-size="32" letter-spacing="-1.2" fill="#000080">public</text><rect x="12.0" y="132.5" width="2" height="2" fill="#b3b3b3"/><rect x="30.0" y="132.5" width="2" height="2" fill="#b3b3b3"/><path d="M42.2 136.5 L55.5 112.5" stroke="#808080" stroke-width="2.6"/><path d="M67.5 116.80000000000003 V133.40000000000003 M60.5 120.90000000000002 L74.5 129.3 M60.5 129.3 L74.5 120.90000000000002" stroke="#808080" stroke-width="2.3" stroke-linecap="round"/><path d="M85.5 116.80000000000003 V133.40000000000003 M78.5 120.90000000000002 L92.5 129.3 M78.5 129.3 L92.5 120.90000000000002" stroke="#808080" stroke-width="2.3" stroke-linecap="round"/><rect x="12.0" y="168.5" width="2" height="2" fill="#b3b3b3"/><rect x="30.0" y="168.5" width="2" height="2" fill="#b3b3b3"/><rect x="48.0" y="168.5" width="2" height="2" fill="#b3b3b3"/><path d="M67.5 152.8 V169.40000000000003 M60.5 156.90000000000003 L74.5 165.3 M60.5 165.3 L74.5 156.90000000000003" stroke="#808080" stroke-width="2.3" stroke-linecap="round"/><rect x="84.0" y="168.5" width="2" height="2" fill="#b3b3b3"/><rect x="12.0" y="204.5" width="2" height="2" fill="#b3b3b3"/><rect x="30.0" y="204.5" width="2" height="2" fill="#b3b3b3"/><rect x="48.0" y="204.5" width="2" height="2" fill="#b3b3b3"/><path d="M67.5 188.8 V205.40000000000003 M60.5 192.90000000000003 L74.5 201.3 M60.5 201.3 L74.5 192.90000000000003" stroke="#808080" stroke-width="2.3" stroke-linecap="round"/><rect x="84.0" y="204.5" width="2" height="2" fill="#b3b3b3"/><rect x="12.0" y="240.5" width="2" height="2" fill="#b3b3b3"/><rect x="30.0" y="240.5" width="2" height="2" fill="#b3b3b3"/><rect x="48.0" y="240.5" width="2" height="2" fill="#b3b3b3"/><path d="M67.5 224.8 V241.40000000000003 M60.5 228.90000000000003 L74.5 237.3 M60.5 237.3 L74.5 228.90000000000003" stroke="#808080" stroke-width="2.3" stroke-linecap="round"/><rect x="84.0" y="240.5" width="2" height="2" fill="#b3b3b3"/><rect x="12.0" y="276.5" width="2" height="2" fill="#b3b3b3"/><rect x="30.0" y="276.5" width="2" height="2" fill="#b3b3b3"/><rect x="48.0" y="276.5" width="2" height="2" fill="#b3b3b3"/><path d="M67.5 260.8 V277.40000000000003 M60.5 264.90000000000003 L74.5 273.3 M60.5 273.3 L74.5 264.90000000000003" stroke="#808080" stroke-width="2.3" stroke-linecap="round"/><rect x="84.0" y="276.5" width="2" height="2" fill="#b3b3b3"/><rect x="12.0" y="312.5" width="2" height="2" fill="#b3b3b3"/><rect x="30.0" y="312.5" width="2" height="2" fill="#b3b3b3"/><rect x="48.0" y="312.5" width="2" height="2" fill="#b3b3b3"/><path d="M67.5 296.8 V313.40000000000003 M60.5 300.90000000000003 L74.5 309.3 M60.5 309.3 L74.5 300.90000000000003" stroke="#808080" stroke-width="2.3" stroke-linecap="round"/><rect x="84.0" y="312.5" width="2" height="2" fill="#b3b3b3"/><rect x="12.0" y="348.5" width="2" height="2" fill="#b3b3b3"/><rect x="30.0" y="348.5" width="2" height="2" fill="#b3b3b3"/><rect x="48.0" y="348.5" width="2" height="2" fill="#b3b3b3"/><path d="M67.5 332.8 V349.40000000000003 M60.5 336.90000000000003 L74.5 345.3 M60.5 345.3 L74.5 336.90000000000003" stroke="#808080" stroke-width="2.3" stroke-linecap="round"/><rect x="84.0" y="348.5" width="2" height="2" fill="#b3b3b3"/><rect x="12.0" y="384.5" width="2" height="2" fill="#b3b3b3"/><rect x="30.0" y="384.5" width="2" height="2" fill="#b3b3b3"/><rect x="48.0" y="384.5" width="2" height="2" fill="#b3b3b3"/><path d="M67.5 368.8 V385.40000000000003 M60.5 372.90000000000003 L74.5 381.3 M60.5 381.3 L74.5 372.90000000000003" stroke="#808080" stroke-width="2.3" stroke-linecap="round"/><rect x="84.0" y="384.5" width="2" height="2" fill="#b3b3b3"/><rect x="12.0" y="420.5" width="2" height="2" fill="#b3b3b3"/><rect x="30.0" y="420.5" width="2" height="2" fill="#b3b3b3"/><rect x="48.0" y="420.5" width="2" height="2" fill="#b3b3b3"/><path d="M67.5 404.8 V421.40000000000003 M60.5 408.90000000000003 L74.5 417.3 M60.5 417.3 L74.5 408.90000000000003" stroke="#808080" stroke-width="2.3" stroke-linecap="round"/><rect x="84.0" y="420.5" width="2" height="2" fill="#b3b3b3"/><rect x="12.0" y="456.5" width="2" height="2" fill="#b3b3b3"/><rect x="30.0" y="456.5" width="2" height="2" fill="#b3b3b3"/><rect x="48.0" y="456.5" width="2" height="2" fill="#b3b3b3"/><path d="M67.5 440.8 V457.40000000000003 M60.5 444.90000000000003 L74.5 453.3 M60.5 453.3 L74.5 444.90000000000003" stroke="#808080" stroke-width="2.3" stroke-linecap="round"/><rect x="84.0" y="456.5" width="2" height="2" fill="#b3b3b3"/><rect x="12.0" y="492.5" width="2" height="2" fill="#b3b3b3"/><rect x="30.0" y="492.5" width="2" height="2" fill="#b3b3b3"/><rect x="48.0" y="492.5" width="2" height="2" fill="#b3b3b3"/><path d="M67.5 476.8 V493.40000000000003 M60.5 480.90000000000003 L74.5 489.3 M60.5 489.3 L74.5 480.90000000000003" stroke="#808080" stroke-width="2.3" stroke-linecap="round"/><rect x="84.0" y="492.5" width="2" height="2" fill="#b3b3b3"/><rect x="12.0" y="528.5" width="2" height="2" fill="#b3b3b3"/><rect x="30.0" y="528.5" width="2" height="2" fill="#b3b3b3"/><rect x="48.0" y="528.5" width="2" height="2" fill="#b3b3b3"/><path d="M67.5 512.8000000000001 V529.4 M60.5 516.9 L74.5 525.3000000000001 M60.5 525.3000000000001 L74.5 516.9" stroke="#808080" stroke-width="2.3" stroke-linecap="round"/><rect x="84.0" y="528.5" width="2" height="2" fill="#b3b3b3"/><rect x="12.0" y="564.5" width="2" height="2" fill="#b3b3b3"/><rect x="30.0" y="564.5" width="2" height="2" fill="#b3b3b3"/><rect x="48.0" y="564.5" width="2" height="2" fill="#b3b3b3"/><path d="M67.5 548.8000000000001 V565.4 M60.5 552.9 L74.5 561.3000000000001 M60.5 561.3000000000001 L74.5 552.9" stroke="#808080" stroke-width="2.3" stroke-linecap="round"/><rect x="84.0" y="564.5" width="2" height="2" fill="#b3b3b3"/><rect x="12.0" y="600.5" width="2" height="2" fill="#b3b3b3"/><rect x="30.0" y="600.5" width="2" height="2" fill="#b3b3b3"/><rect x="48.0" y="600.5" width="2" height="2" fill="#b3b3b3"/><path d="M67.5 584.8000000000001 V601.4 M60.5 588.9 L74.5 597.3000000000001 M60.5 597.3000000000001 L74.5 588.9" stroke="#808080" stroke-width="2.3" stroke-linecap="round"/><rect x="84.0" y="600.5" width="2" height="2" fill="#b3b3b3"/><rect x="12.0" y="636.5" width="2" height="2" fill="#b3b3b3"/><rect x="30.0" y="636.5" width="2" height="2" fill="#b3b3b3"/><rect x="48.0" y="636.5" width="2" height="2" fill="#b3b3b3"/><path d="M67.5 620.8000000000001 V637.4 M60.5 624.9 L74.5 633.3000000000001 M60.5 633.3000000000001 L74.5 624.9" stroke="#808080" stroke-width="2.3" stroke-linecap="round"/><rect x="84.0" y="636.5" width="2" height="2" fill="#b3b3b3"/><rect x="12.0" y="672.5" width="2" height="2" fill="#b3b3b3"/><rect x="30.0" y="672.5" width="2" height="2" fill="#b3b3b3"/><rect x="48.0" y="672.5" width="2" height="2" fill="#b3b3b3"/><path d="M67.5 656.8000000000001 V673.4 M60.5 660.9 L74.5 669.3000000000001 M60.5 669.3000000000001 L74.5 660.9" stroke="#808080" stroke-width="2.3" stroke-linecap="round"/><rect x="84.0" y="672.5" width="2" height="2" fill="#b3b3b3"/><rect x="12.0" y="708.5" width="2" height="2" fill="#b3b3b3"/><rect x="30.0" y="708.5" width="2" height="2" fill="#b3b3b3"/><rect x="48.0" y="708.5" width="2" height="2" fill="#b3b3b3"/><path d="M67.5 692.8000000000001 V709.4 M60.5 696.9 L74.5 705.3000000000001 M60.5 705.3000000000001 L74.5 696.9" stroke="#808080" stroke-width="2.3" stroke-linecap="round"/><rect x="84.0" y="708.5" width="2" height="2" fill="#b3b3b3"/><rect x="12.0" y="744.5" width="2" height="2" fill="#b3b3b3"/><rect x="30.0" y="744.5" width="2" height="2" fill="#b3b3b3"/><rect x="48.0" y="744.5" width="2" height="2" fill="#b3b3b3"/><path d="M67.5 728.8 V745.3999999999999 M60.5 732.8999999999999 L74.5 741.3 M60.5 741.3 L74.5 732.8999999999999" stroke="#808080" stroke-width="2.3" stroke-linecap="round"/><rect x="84.0" y="744.5" width="2" height="2" fill="#b3b3b3"/><rect x="12.0" y="780.5" width="2" height="2" fill="#b3b3b3"/><rect x="30.0" y="780.5" width="2" height="2" fill="#b3b3b3"/><rect x="48.0" y="780.5" width="2" height="2" fill="#b3b3b3"/><path d="M67.5 764.8 V781.3999999999999 M60.5 768.8999999999999 L74.5 777.3 M60.5 777.3 L74.5 768.8999999999999" stroke="#808080" stroke-width="2.3" stroke-linecap="round"/><path d="M78.2 784.5 L91.5 760.5" stroke="#808080" stroke-width="2.6"/><rect x="12.0" y="816.5" width="2" height="2" fill="#b3b3b3"/><rect x="30.0" y="816.5" width="2" height="2" fill="#b3b3b3"/><text x="40" y="818.5" font-family="Liberation Mono" font-weight="700" font-size="32" letter-spacing="-1.2" fill="#000080">pub</text><rect x="12.0" y="852.5" width="2" height="2" fill="#b3b3b3"/><rect x="30.0" y="852.5" width="2" height="2" fill="#b3b3b3"/><rect x="48.0" y="852.5" width="2" height="2" fill="#b3b3b3"/><rect x="66.0" y="852.5" width="2" height="2" fill="#b3b3b3"/><rect x="84.0" y="852.5" width="2" height="2" fill="#b3b3b3"/><rect x="12.0" y="888.5" width="2" height="2" fill="#b3b3b3"/><rect x="30.0" y="888.5" width="2" height="2" fill="#b3b3b3"/><rect x="48.0" y="888.5" width="2" height="2" fill="#b3b3b3"/><rect x="66.0" y="888.5" width="2" height="2" fill="#b3b3b3"/><rect x="84.0" y="888.5" width="2" height="2" fill="#b3b3b3"/></svg>
<div style="position:absolute;left:555px;top:924px;width:485px;height:68px;border:10px solid #e8412a;filter:drop-shadow(1px 2px 2px rgba(0,0,0,0.35));"></div>
<div id="end-left"></div>
</body></html>
